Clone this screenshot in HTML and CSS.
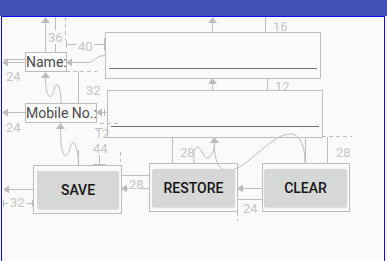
FILE: index.html
```html
<!DOCTYPE html>
<html lang="en">
<head>
    <meta charset="UTF-8">
    <meta name="viewport" content="width=device-width, initial-scale=1.0">
    <title>Layout Blueprint</title>
    <link rel="stylesheet" href="styles.css">
</head>
<body>
    <div class="editor">
        <div class="appbar"></div>
        <div class="screen"></div>

        <!-- constraint lines and margins -->
        <svg class="constraints" width="387" height="261" viewBox="0 0 387 261">
            <g class="line">
                <!-- Name: top -->
                <line x1="45.5" y1="22" x2="45.5" y2="52"/>
                <line x1="55.5" y1="17" x2="55.5" y2="30"/>
                <line x1="55.5" y1="44" x2="55.5" y2="52"/>
                <line x1="51" y1="52.5" x2="60" y2="52.5"/>
                <line class="dash" x1="65.5" y1="17" x2="65.5" y2="40"/>
                <!-- Name: to edit 1 -->
                <line x1="66" y1="44.5" x2="76" y2="44.5"/>
                <line x1="94" y1="44.5" x2="105" y2="44.5"/>
                <line x1="66.5" y1="40" x2="66.5" y2="48"/>
                <line x1="104.5" y1="38" x2="104.5" y2="50"/>
                <path d="M72,62.5 L87,62.5 C97,62.5 94,55.5 105,55.5"/>
                <!-- Name: left -->
                <line x1="8" y1="62.5" x2="25" y2="62.5"/>
                <line x1="4" y1="59.5" x2="25" y2="59.5"/>
                <!-- Name: bottom -->
                <line class="dash" x1="66" y1="71.5" x2="97" y2="71.5"/>
                <line x1="78.5" y1="71" x2="78.5" y2="103"/>
                <path d="M45.5,78 C45.5,100 52,100 54,90 C56,80 61,84 61,103"/>
                <!-- Mobile -->
                <line x1="8" y1="112.5" x2="25" y2="112.5"/>
                <line x1="102" y1="112.5" x2="107" y2="112.5"/>
                <line x1="104.5" y1="109" x2="104.5" y2="116"/>
                <line x1="95" y1="128.5" x2="103" y2="128.5"/>
                <line class="dash" x1="100" y1="123.5" x2="121" y2="123.5"/>
                <path d="M60.5,129 C60.5,160 67,160 70,148 C73,136 78,145 78.5,165"/>
                <line x1="78.5" y1="150" x2="78.5" y2="165"/>
                <line x1="99.5" y1="155" x2="99.5" y2="164"/>
                <line x1="93" y1="164.5" x2="106" y2="164.5"/>
                <line class="dash" x1="120.5" y1="152" x2="120.5" y2="162"/>
                <!-- edit texts -->
                <line x1="212.5" y1="22" x2="212.5" y2="32"/>
                <line x1="265.5" y1="17" x2="265.5" y2="32"/>
                <line x1="212.5" y1="84" x2="212.5" y2="90"/>
                <line x1="267.5" y1="78" x2="267.5" y2="90"/>
                <line x1="172.5" y1="137" x2="172.5" y2="163"/>
                <line x1="327.5" y1="137" x2="327.5" y2="163"/>
                <line class="dash" x1="322" y1="136.5" x2="352" y2="136.5"/>
                <path d="M194,163 C193,150 196,146 198,147 C202,149 204,160 208,158 C212,156 214,150 214.5,143"/>
                <path d="M214.5,143 C214.5,165 220,172 232,170 C250,166 272,133 291,134 C302,135 305,150 305,163"/>
                <line x1="305.5" y1="137" x2="305.5" y2="163"/>
                <!-- buttons -->
                <line x1="8" y1="189.5" x2="33" y2="189.5"/>
                <line x1="3" y1="203.5" x2="8" y2="203.5"/>
                <line x1="27" y1="203.5" x2="33" y2="203.5"/>
                <line x1="3.5" y1="200" x2="3.5" y2="207"/>
                <line x1="32.5" y1="200" x2="32.5" y2="207"/>
                <line x1="121" y1="175.5" x2="149" y2="175.5"/>
                <line x1="127" y1="188.5" x2="129" y2="188.5"/>
                <line x1="142" y1="188.5" x2="149" y2="188.5"/>
                <line x1="243" y1="188.5" x2="262" y2="188.5"/>
                <line x1="237" y1="199.5" x2="262" y2="199.5"/>
                <line class="dash" x1="237.5" y1="212" x2="237.5" y2="221"/>
            </g>
            <g class="head">
                <polygon points="45.5,17 41,23 50,23"/>
                <polygon points="66,62.5 72,58.5 72,66.5"/>
                <polygon points="2,62.5 8,58.5 8,66.5"/>
                <polygon points="45.5,72 41,78 50,78"/>
                <polygon points="2,112.5 8,108.5 8,116.5"/>
                <polygon points="96,112.5 102,108.5 102,116.5"/>
                <polygon points="60.5,123 56,129 65,129"/>
                <polygon points="212.5,17 208,23 217,23"/>
                <polygon points="212.5,78 208,84 217,84"/>
                <polygon points="214.5,137 210,143 219,143"/>
                <polygon points="3,189.5 9,185.5 9,193.5"/>
                <polygon points="121,188.5 127,184.5 127,192.5"/>
                <polygon points="237,188.5 243,184.5 243,192.5"/>
            </g>
            <g class="margin">
                <text x="48" y="42">36</text>
                <text x="78" y="51">40</text>
                <text x="6" y="81">24</text>
                <text x="86" y="95">32</text>
                <text x="273" y="31">16</text>
                <text x="275" y="91">12</text>
                <text x="6" y="132">24</text>
                <text x="95" y="138">12</text>
                <text x="93" y="152.5">44</text>
                <text x="180" y="157">28</text>
                <text x="336" y="157">28</text>
                <text x="129" y="189">28</text>
                <text x="10" y="207">32</text>
                <text x="243" y="213">24</text>
            </g>
        </svg>

        <div class="widget label name-label">Name:</div>
        <div class="widget label mobile-label">Mobile No.:</div>

        <div class="widget edit edit-name"><span class="underline"></span></div>
        <div class="widget edit edit-mobile"><span class="underline"></span></div>

        <div class="widget slot save"><button class="btn">SAVE</button></div>
        <div class="widget slot restore"><button class="btn">RESTORE</button></div>
        <div class="widget slot clear"><button class="btn">CLEAR</button></div>
    </div>
</body>
</html>
```

FILE: styles.css
```css
body {
    margin: 0;
    padding: 0;
    background-color: #fafafa;
    font-family: 'Roboto', 'Liberation Sans', sans-serif;
}

.editor {
    position: relative;
    width: 387px;
    height: 261px;
    overflow: hidden;
    background-color: #f5f5f5;
}

.appbar {
    height: 16px;
    background-color: #3f51b5;
}

.screen {
    box-sizing: border-box;
    width: 384px;
    height: 260px;
    margin-left: 1px;
    background-color: #fafafa;
    border: 1px solid #0a0aff;
    border-bottom: none;
}

/* blueprint overlay */
.constraints {
    position: absolute;
    top: 0;
    left: 0;
}

.constraints .line line,
.constraints .line path {
    stroke: #bdbdbd;
    stroke-width: 1;
    fill: none;
}

.constraints .line .dash {
    stroke-dasharray: 4 3;
}

.constraints .head polygon {
    fill: #bdbdbd;
}

.constraints .margin text {
    fill: #c6c6c6;
    font-family: 'Roboto', 'Liberation Sans', sans-serif;
    font-size: 13px;
}

/* widgets placed on the canvas */
.widget {
    position: absolute;
    box-sizing: border-box;
    border: 1px solid #bdbdbd;
}

.label {
    height: 20px;
    color: #4a4a4a;
    font-size: 14px;
    line-height: 18px;
    white-space: nowrap;
}

.name-label {
    left: 25px;
    top: 52px;
    width: 42px;
}

.mobile-label {
    left: 25px;
    top: 103px;
    width: 72px;
}

.edit {
    width: 216px;
    height: 47px;
}

.edit .underline {
    position: absolute;
    left: 3px;
    right: 3px;
    top: 35px;
    height: 1px;
    background-color: #6f6f6f;
}

.edit-name {
    left: 105px;
    top: 32px;
}

.edit-mobile {
    left: 107px;
    top: 90px;
    height: 48px;
}

.slot {
    width: 89px;
    height: 49px;
    padding: 5px 2px 4px 2px;
}

.save {
    left: 33px;
    top: 165px;
    padding-left: 3px;
}

.restore {
    left: 149px;
    top: 163px;
}

.clear {
    left: 262px;
    top: 163px;
    width: 88px;
    padding-left: 1px;
}

.btn {
    display: block;
    width: 100%;
    height: 100%;
    margin: 0;
    border: none;
    border-radius: 2px;
    background-color: #d6d7d7;
    box-shadow: 0 1px 1px rgba(0, 0, 0, 0.12);
    color: #141414;
    font-family: 'Roboto', 'Liberation Sans', sans-serif;
    font-size: 14px;
    font-weight: 500;
    padding: 0;
}
```
